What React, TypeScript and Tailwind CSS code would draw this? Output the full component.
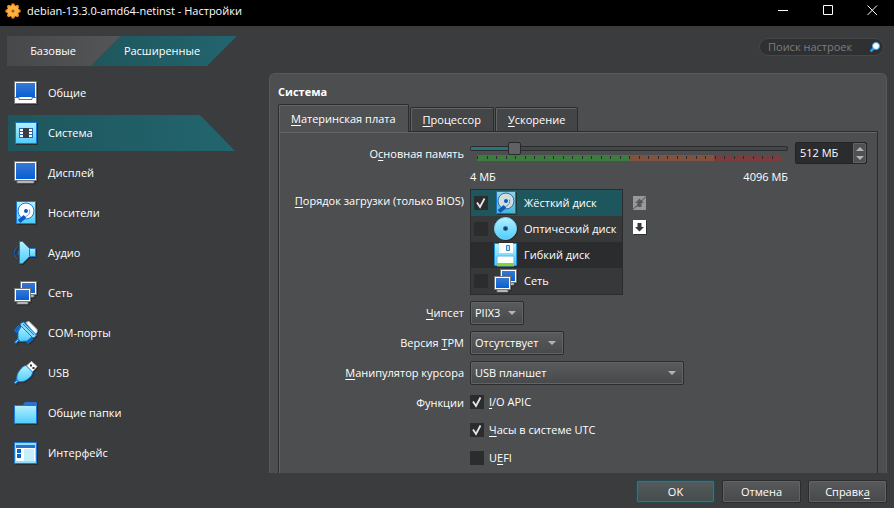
import { useState, type ReactNode } from "react";
import clsx from "clsx";

const GENERAL_TABS = ["Базовые", "Расширенные"];

function Monitor({ x, y, w, h }: { x: number; y: number; w: number; h: number }) {
  return (
    <g>
      <path d={`M${x + 3} ${y + h}h${w - 6}v2h-${w - 6}z`} fill="#fff" stroke="#6d6d70" />
      <rect x={x + 0.5} y={y + 0.5} width={w - 1} height={h - 1} fill="#fff" stroke="#77777a" />
      <rect x={x + 2} y={y + 2} width={w - 4} height={h - 4} fill="url(#blue)" />
    </g>
  );
}

const icons: Record<string, ReactNode> = {
  general: (
    <g>
      <path d="M.5 .5h22v22h-22z" fill="#fff" stroke="#77777a" />
      <path d="M2 2h19v14h-19z" fill="url(#blue)" />
      <path d="M1 16.500h4v2h13v-2h4" fill="none" stroke="#6d6d70" />
    </g>
  ),
  system: (
    <g>
      <path d="M1.500 1.500h21v21h-21z" fill="url(#cyan)" stroke="#1879d6" />
      <path d="M5 7h14v10h-14z" fill="#2c6ab0" />
      <path d="M6 8h3v2h-3zM6 11h3v2h-3zM6 14h3v2h-3zM15 8h3v2h-3zM15 11h3v2h-3zM15 14h3v2h-3z" fill="#fff" />
      <path d="M9 7h6v10h-6z" fill="#3a3b45" />
    </g>
  ),
  display: <Monitor x={0} y={0} w={23} h={20} />,
  disk: (
    <g>
      <path d="M2.500 .5h19v22h-19z" fill="url(#cyan)" stroke="#1879d6" />
      <circle cx="12" cy="10" r="8" fill="#fff" stroke="#1879d6" />
      <circle cx="12" cy="10" r="2" fill="#0b59c4" />
      <path d="M15.500 8.500c1 5-2 6-5 7.500" fill="none" stroke="#6b98c8" />
      <path d="M5 20.500l6-5" stroke="#0b59c4" strokeWidth="4" />
    </g>
  ),
  audio: (
    <g>
      <path d="M3.500 6c-4 3-4 8 0 12" fill="none" stroke="#1565c0" />
      <path d="M5.500 9c-1.500 2-1.500 4 0 6z" fill="#7fdcff" stroke="#1565c0" />
      <path d="M15 7.500h6.500v8h-6.500z" fill="url(#cyan)" stroke="#1879d6" />
      <path d="M5.500 .5h3l7 7v8l-7 7h-3z" fill="url(#cyan)" stroke="#1879d6" />
    </g>
  ),
  network: (
    <g>
      <Monitor x={6} y={0} w={17} h={14} />
      <Monitor x={0} y={7} w={17} h={14} />
    </g>
  ),
  serial: (
    <g strokeLinejoin="round">
      <path d="M1 22l4-4" stroke="#1879d6" strokeWidth="3" />
      <path d="M1.500 21.500l3-3" stroke="#8fe0ff" />
      <path d="M12 1.500l3-1 8 8v3l-2 1.500z" fill="#fff" stroke="#c9c9cc" />
      <path d="M.5 9.500l4-5 2 2 -4 5zM12 20.500l5-4 2 2 -5 4z" fill="#0b63cc" stroke="#1879d6" />
      <path d="M4 11l4-7 11 11 -6 5 -7 .5 -2-3z" fill="url(#cyan)" stroke="#1879d6" />
      <path d="M6.500 2.500l3-1.500 13 13 -2 2.500h-2l-12-12z" fill="#7fdcff" stroke="#1879d6" />
      <path d="M9 3l11 11" stroke="#1879d6" />
    </g>
  ),
  usb: (
    <g strokeLinejoin="round">
      <path d="M.5 22.500l4-4" stroke="#1879d6" strokeWidth="3" />
      <path d="M1 22l3-3" stroke="#8fe0ff" />
      <path d="M12.500 5l5-4.500 5.500 5 -5 5.500z" fill="#fff" stroke="#d0d0d3" />
      <path d="M16 3.500h2v2h-2zM18.500 6h2v2h-2z" fill="#333" />
      <path d="M12 4.500l6.500 6.500c0 4-4 7-8 9 -3 1-5 1-7 0 -1-2-1-4 0-7 2-4 5-8 8.500-8.500z" fill="url(#cyan)" stroke="#1879d6" />
    </g>
  ),
  folder: (
    <g>
      <path d="M8 5l3-4h11l1 1v4h-15z" fill="#2b70d0" />
      <path d="M.5 4.500h22v18h-22z" fill="url(#cyan)" stroke="#1879d6" />
    </g>
  ),
  interface: (
    <g>
      <path d="M.5 1.500h22v21h-22z" fill="#fff" stroke="#1879d6" />
      <path d="M1 2h21v2h-21zM1 20h21v2h-21zM1 2h1v20h-1zM21 2h1v20h-1z" fill="#8fe0ff" />
      <path d="M2 4h19v3h-19z" fill="#2b70d0" />
      <path d="M3 8h4v4h-4zM3 13h4v4h-4z" fill="#0b63cc" />
      <path d="M10 8h10v12h-10z" fill="#c4effb" />
    </g>
  ),
  optical: (
    <g>
      <circle cx="11.500" cy="11.500" r="11" fill="url(#cyan)" stroke="#7fd0f5" />
      <circle cx="11.500" cy="11.500" r="2.500" fill="#1a79c4" />
      <circle cx="11.500" cy="11.500" r="1.500" fill="#263238" />
    </g>
  ),
  floppy: (
    <g>
      <path d="M.5 .5h22v22h-22z" fill="url(#cyan)" stroke="#1893dc" />
      <path d="M5 0h14v10h-14z" fill="#fff" />
      <path d="M12.500 2.500h3v5h-3z" fill="#b9e6f7" stroke="#2a7fb8" />
      <path d="M3 13h17v10h-17z" fill="#fff" stroke="#57b8e8" />
      <path d="M3 20h17v3h-17z" fill="#84d822" />
    </g>
  ),
};

function Icon({ name, className }: { name: string; className?: string }) {
  return (
    <svg width="24" height="24" viewBox="0 0 24 24" className={clsx("shrink-0 drop-shadow-[1px_1px_0_#2a2a2c]", className)}>
      {icons[name]}
    </svg>
  );
}

const pages = [
  { icon: "general", label: "Общие" },
  { icon: "system", label: "Система" },
  { icon: "display", label: "Дисплей" },
  { icon: "disk", label: "Носители" },
  { icon: "audio", label: "Аудио" },
  { icon: "network", label: "Сеть" },
  { icon: "serial", label: "COM-порты" },
  { icon: "usb", label: "USB" },
  { icon: "folder", label: "Общие папки" },
  { icon: "interface", label: "Интерфейс" },
];

// text with one underlined access key
function Hot({ text, at = 0 }: { text: string; at?: number }) {
  return (
    <span className="whitespace-pre">
      {text.slice(0, at)}
      <span className="underline decoration-1 underline-offset-2">{text[at]}</span>
      {text.slice(at + 1)}
    </span>
  );
}

function Check({ id, checked, onChange, label }: { id: string; checked: boolean; onChange: () => void; label?: string }) {
  return (
    <span className="grid size-3.5 shrink-0 place-items-center">
      <input
        id={id}
        type="checkbox"
        aria-label={label}
        checked={checked}
        onChange={onChange}
        className="col-start-1 row-start-1 size-3.5 appearance-none bg-[#2b2c2e]"
      />
      {checked && (
        <svg width="14" height="14" viewBox="0 0 14 14" className="pointer-events-none col-start-1 row-start-1">
          <path d="M3 6.500l3 4.500l4.500-8.500" fill="none" stroke="#e6e6e6" strokeWidth="1.800" />
        </svg>
      )}
    </span>
  );
}

function Combo({ id, options, className }: { id: string; options: string[]; className: string }) {
  return (
    <div className={clsx("grid h-6 items-center", className)}>
      <select
        id={id}
        className="col-start-1 row-start-1 h-6 w-full appearance-none rounded-xs border border-[#2b2c2e] bg-linear-to-b from-[#5a5b5d] to-[#48494b] pl-1 text-white shadow-[inset_0_0_0_1px_#626365]"
      >
        {options.map((o) => (
          <option key={o}>{o}</option>
        ))}
      </select>
      <svg width="8" height="4" viewBox="0 0 8 4" className="pointer-events-none col-start-1 row-start-1 mr-2 justify-self-end">
        <path d="M0 0h8l-4 4z" fill="#b4b4b6" />
      </svg>
    </div>
  );
}

function MemorySlider({ value, onChange }: { value: number; onChange: (v: number) => void }) {
  const fill = ((value - 4) / 4092) * 100;
  return (
    <div className="min-w-0 flex-1">
      <div className="-mt-px grid h-3.5 items-center">
        <div className="col-start-1 row-start-1 h-[5px] rounded-xs border border-[#2b2c2e] bg-[#454648]">
          <div className="h-full bg-[#26747d]" style={{ width: `${fill}%` }} />
        </div>
        <input
          id="memory"
          type="range"
          min={4}
          max={4096}
          value={value}
          onChange={(e) => onChange(Number(e.target.value))}
          className="col-start-1 row-start-1 h-3.5 w-full appearance-none bg-transparent [&::-webkit-slider-thumb]:size-[13px] [&::-webkit-slider-thumb]:appearance-none [&::-webkit-slider-thumb]:rounded-xs [&::-webkit-slider-thumb]:border [&::-webkit-slider-thumb]:border-[#29292b] [&::-webkit-slider-thumb]:bg-[#606163]"
        />
      </div>
      <div className="mx-[7px] flex h-1.5 bg-[linear-gradient(90deg,#3d7c3f_50%,#80523f_50%,#80523f_78%,#7c3d3f_78%)]">
        {Array.from({ length: 32 }, (_, i) => (
          <span key={i} className="mt-px h-[3px] flex-1 border-l border-[#2b2c2e]" />
        ))}
      </div>
      <div className="mt-2.5 flex justify-between leading-3">
        <span>4 МБ</span>
        <span>4096 МБ</span>
      </div>
    </div>
  );
}

function BootOrder() {
  const [items, setItems] = useState([
    { icon: "disk", label: "Жёсткий диск", on: true },
    { icon: "optical", label: "Оптический диск", on: false },
    { icon: "floppy", label: "Гибкий диск", on: false },
    { icon: "network", label: "Сеть", on: false },
  ]);
  const toggle = (i: number) => setItems(items.map((it, n) => (n === i ? { ...it, on: !it.on } : it)));

  return (
    <div className="flex">
      <ul className="w-[153px] border border-[#2a2b2d]">
        {items.map((it, i) => (
          <li
            key={it.label}
            className={clsx(
              "flex h-[26px] items-center pl-[3px]",
              i === 0 ? "bg-[#1e565e]" : i === 2 ? "bg-[#2b2c2e]" : "bg-[#37383a]"
            )}
          >
            <Check id={`boot-${i}`} checked={it.on} onChange={() => toggle(i)} label={it.label} />
            <Icon name={it.icon} className={clsx("mr-1.5 ml-1.5", i === 0 && "opacity-80")} />
            <label htmlFor={`boot-${i}`} className="whitespace-nowrap">{it.label}</label>
          </li>
        ))}
      </ul>
      <div className="mt-[7px] ml-2.5 flex flex-col gap-2.5">
        <button aria-label="Вверх" disabled className="h-3.5 w-[13px] bg-[#98999b]">
          <svg width="13" height="14" viewBox="0 0 13 14">
            <path d="M6.500 2.500l4.500 4.500h-2.500v4h-4v-4h-2.500z" fill="#5b5c5e" />
            <path d="M0 13.500l13-13" stroke="#48494b" />
          </svg>
        </button>
        <button aria-label="Вниз" className="h-3.5 w-[13px] bg-white shadow-[1px_1px_0_#2f3032]">
          <svg width="13" height="14" viewBox="0 0 13 14">
            <path d="M4.500 3h4v4h2.500l-4.500 4.500l-4.500-4.500h2.500z" fill="#3c3635" />
          </svg>
        </button>
      </div>
    </div>
  );
}

function MotherboardForm() {
  const [memory, setMemory] = useState(512);
  const [features, setFeatures] = useState([
    { id: "apic", text: "I/O APIC", at: 0, on: true },
    { id: "utc", text: "Часы в системе UTC", at: 0, on: true },
    { id: "uefi", text: "UEFI", at: 1, on: false },
  ]);
  const toggle = (id: string) => setFeatures(features.map((f) => (f.id === id ? { ...f, on: !f.on } : f)));
  const label = "text-right leading-6 whitespace-nowrap";

  return (
    <div className="grid grid-cols-[177px_1fr] gap-x-1.5 gap-y-1.5 pt-2.5 pr-2.5 pl-2">
      <label htmlFor="memory" className={label}>
        <Hot text="Основная память" at={1} />
      </label>
      <div className="flex items-start gap-[7px]">
        <MemorySlider value={memory} onChange={setMemory} />
        <div className="flex h-[22px] w-[72px] rounded-xs border border-[#232426] bg-[#2b2c2e]">
          <input
            aria-label="Размер памяти"
            value={`${memory} МБ`}
            onChange={(e) => setMemory(parseInt(e.target.value) || 4)}
            className="w-0 flex-1 pl-1"
          />
          <div className="flex w-[13px] flex-col rounded-r-xs border border-[#626365] bg-[#505153]">
            <button aria-label="Больше" onClick={() => setMemory(memory + 4)} className="grid flex-1 place-items-center">
              <svg width="8" height="4" viewBox="0 0 8 4"><path d="M0 4h8l-4-4z" fill="#b4b4b6" /></svg>
            </button>
            <button aria-label="Меньше" onClick={() => setMemory(memory - 4)} className="grid flex-1 place-items-center">
              <svg width="8" height="4" viewBox="0 0 8 4"><path d="M0 0h8l-4 4z" fill="#b4b4b6" /></svg>
            </button>
          </div>
        </div>
      </div>

      <label htmlFor="boot-0" className={label}>
        <Hot text="Порядок загрузки (только BIOS)" />
      </label>
      <BootOrder />

      <label htmlFor="chipset" className={label}>
        <Hot text="Чипсет" />
      </label>
      <Combo id="chipset" options={["PIIX3", "ICH9"]} className="w-[54px]" />

      <label htmlFor="tpm" className={label}>
        <Hot text="Версия TPM" at={7} />
      </label>
      <Combo id="tpm" options={["Отсутствует", "v1.2", "v2.0"]} className="w-[94px]" />

      <label htmlFor="pointer" className={label}>
        <Hot text="Манипулятор курсора" />
      </label>
      <Combo id="pointer" options={["USB планшет", "PS/2 мышь"]} className="w-[214px]" />

      <span className={label}>Функции</span>
      <div className="flex flex-col gap-1.5">
        {features.map((f) => (
          <div key={f.id} className="flex h-[22px] items-center gap-[5px]">
            <Check id={f.id} checked={f.on} onChange={() => toggle(f.id)} />
            <label htmlFor={f.id}>
              <Hot text={f.text} at={f.at} />
            </label>
          </div>
        ))}
      </div>
    </div>
  );
}

function TitleBar() {
  return (
    <header className="flex h-[26px] shrink-0 items-center bg-black pl-[5px]">
      <svg width="16" height="16" viewBox="0 0 16 16" className="-mt-1">
        {[0, 45, 90, 135, 180, 225, 270, 315].map((a) => (
          <circle key={a} cx="8" cy="2" r="1.800" fill="#f58a1c" transform={`rotate(${a} 8 8)`} />
        ))}
        <circle cx="8" cy="8" r="6" fill="#fbb040" />
        <circle cx="8" cy="8" r="1.500" fill="#a8571a" />
      </svg>
      <h1 className="-mt-1 ml-1.5 flex-1">debian-13.3.0-amd64-netinst - Настройки</h1>
      <div className="-mt-1.5 flex">
        <button aria-label="Свернуть" className="flex w-[45px] justify-center">
          <svg width="11" height="11" viewBox="0 0 11 11"><path d="M0 5.500h10" stroke="#fff" /></svg>
        </button>
        <button aria-label="Развернуть" className="flex w-[45px] justify-center">
          <svg width="11" height="11" viewBox="0 0 11 11"><path d="M.5 .5h9v9h-9z" fill="none" stroke="#fff" /></svg>
        </button>
        <button aria-label="Закрыть" className="flex w-[43px] justify-center">
          <svg width="11" height="11" viewBox="0 0 11 11"><path d="M.5 .5l9.500 9.500M10 .5l-9.500 9.500" stroke="#fff" /></svg>
        </button>
      </div>
    </header>
  );
}

export default function App() {
  const [mode, setMode] = useState(1);
  const [page, setPage] = useState(1);

  return (
    <div className="flex h-screen flex-col overflow-hidden bg-[#3b3c3e] font-['Open_Sans','Noto_Sans',sans-serif] text-[11px] leading-4 text-white">
      {/* shared gradients for the icons */}
      <svg className="absolute size-0">
        <linearGradient id="blue" x1="0" y1="0" x2="0" y2="1">
          <stop offset="0" stopColor="#3a78d2" />
          <stop offset="1" stopColor="#0560d4" />
        </linearGradient>
        <linearGradient id="cyan" x1="0" y1="0" x2="0" y2="1">
          <stop offset="0" stopColor="#b4f0ff" />
          <stop offset="1" stopColor="#4fcdfb" />
        </linearGradient>
      </svg>

      <TitleBar />

      <div className="flex h-[47px] shrink-0 items-start justify-between pt-2.5 pr-2.5 pl-[7px]">
        <div className="flex">
          {GENERAL_TABS.map((t, i) => (
            <button
              key={t}
              onClick={() => setMode(i)}
              className={clsx(
                "h-[30px]",
                i === 0
                  ? "w-[114px] bg-linear-to-r pr-[22px] [clip-path:polygon(0_0,100%_0,84px_100%,0_100%)]"
                  : "-ml-[30px] w-[146px] bg-linear-to-r pr-1 [clip-path:polygon(30px_0,100%_0,116px_100%,0_100%)]",
                mode === i ? "from-[#1f565d] to-[#22656e]" : "from-[#47484a] to-[#545557]"
              )}
            >
              {t}
            </button>
          ))}
        </div>
        <div className="mt-0.5 flex h-[18px] w-[125px] items-center rounded-full border border-[#464749] bg-[#2f3032] pr-[3px] pl-2">
          <input
            type="text"
            aria-label="Поиск настроек"
            placeholder="Поиск настроек"
            className="w-0 flex-1 outline-none placeholder:text-[#7b7c7e]"
          />
          <svg width="10" height="10" viewBox="0 0 10 10">
            <path d="M.5 9.500l3-3" stroke="#2b9be8" strokeWidth="2.500" />
            <circle cx="6" cy="4" r="3.500" fill="#fff" stroke="#3ba7ee" />
          </svg>
        </div>
      </div>

      <div className="flex min-h-0 flex-1 pr-[7px]">
        <nav className="flex w-[269px] shrink-0 flex-col gap-1 pt-0.5 pl-2">
          {pages.map((p, i) => (
            <button
              key={p.label}
              onClick={() => setPage(i)}
              className={clsx(
                "flex h-9 w-[227px] shrink-0 items-center gap-2.5 pl-1.5 text-left",
                page === i && "bg-linear-to-r from-[#1f565d] to-[#22656e] [clip-path:polygon(0_0,192px_0,100%_100%,0_100%)]"
              )}
            >
              <Icon name={p.icon} />
              {p.label}
            </button>
          ))}
        </nav>

        <main className="flex min-w-0 flex-1 flex-col overflow-hidden rounded-t-md border-x border-t border-[#58595b] bg-[#4d4e50] px-2 pt-2">
          <h2 className="leading-5 font-bold">{pages[page].label}</h2>
          <div className="mt-0.5 -mb-px flex items-end gap-px" role="tablist">
            {["Материнская плата", "Процессор", "Ускорение"].map((t, i) => (
              <button
                key={t}
                role="tab"
                aria-selected={i === 0}
                className={clsx(
                  "rounded-t-xs border border-b-0 border-[#2b2c2e] px-3 shadow-[inset_1px_1px_0_#646567]",
                  i === 0 ? "relative h-7 bg-[#505153]" : "mb-px h-6 bg-[#444547]"
                )}
              >
                <Hot text={t} />
              </button>
            ))}
          </div>
          <section className="flex-1 border-x border-t border-[#2b2c2e] shadow-[inset_1px_1px_0_#646567]">
            <MotherboardForm />
          </section>
        </main>
      </div>

      <footer className="flex shrink-0 justify-end gap-[7px] pt-[7px] pr-[7px] pb-[5px]">
        {["OK", "Отмена", "Справка"].map((t, i) => (
          <button
            key={t}
            className={clsx(
              "h-[23px] w-[79px] rounded-xs border bg-linear-to-b shadow-[inset_0_0_0_1px_#626365]",
              i === 0 ? "border-[#1f4c52] from-[#545b5d] to-[#454c4e]" : "border-[#2b2c2e] from-[#58595b] to-[#48494b]"
            )}
          >
            {i === 2 ? <Hot text={t} at={6} /> : t}
          </button>
        ))}
      </footer>
    </div>
  );
}
